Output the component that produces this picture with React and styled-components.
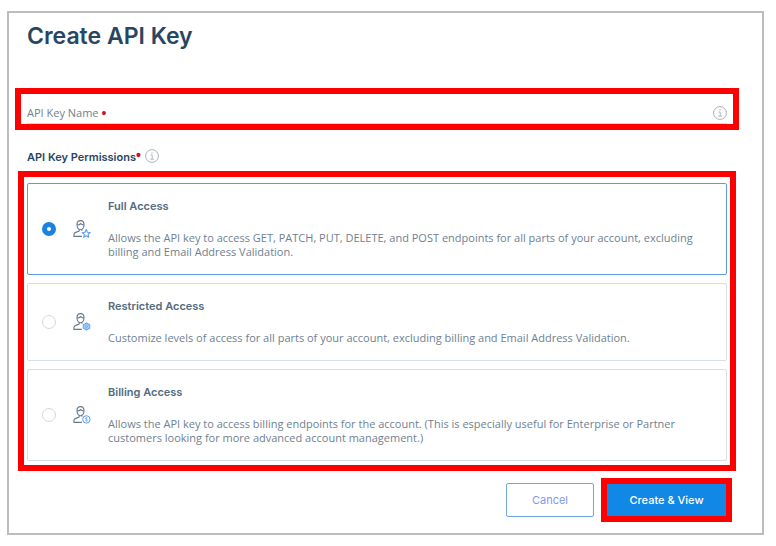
import React, { useState } from 'react';
import styled, { createGlobalStyle } from 'styled-components';

const permissions = [
    {
        id: 'full',
        title: 'Full Access',
        text: 'Allows the API key to access GET, PATCH, PUT, DELETE, and POST endpoints for all parts of your account, excluding billing and Email Address Validation.'
    },
    {
        id: 'restricted',
        title: 'Restricted Access',
        text: 'Customize levels of access for all parts of your account, excluding billing and Email Address Validation.'
    },
    {
        id: 'billing',
        title: 'Billing Access',
        text: 'Allows the API key to access billing endpoints for the account. (This is especially useful for Enterprise or Partner customers looking for more advanced account management.)'
    }
];

const InfoIcon = () => (
    <svg width="14" height="14" viewBox="0 0 14 14" fill="none" stroke="#a9b0bb" aria-hidden="true">
        <circle cx="7" cy="7" r="6.4" strokeWidth="1" />
        <path d="M5.6 6h1.6v4M5.2 10.2h3.8" strokeWidth="0.9" />
        <circle cx="7" cy="3.9" r="0.7" fill="#a9b0bb" stroke="none" />
    </svg>
);

//small blue mark in the corner of the person
const badges = {
    full: (
        <path
            d="M13.2 9.6l1.2 2.6 2.8.3-2.1 1.9.6 2.8-2.5-1.4-2.5 1.4.6-2.8-2.1-1.9 2.8-.3z"
            stroke="#5b9cec"
            strokeLinejoin="round"
        />
    ),
    restricted: (
        <g stroke="#6aa8f2">
            <path d="M13.5 9.9l3.2 1.8v3.6l-3.2 1.8-3.2-1.8v-3.6z" fill="#a5cbf7" strokeLinejoin="round" />
            <circle cx="13.5" cy="13.5" r="1.1" strokeWidth="0.8" />
        </g>
    ),
    billing: (
        <g stroke="#5b9cec">
            <circle cx="13.4" cy="13.4" r="3.7" strokeWidth="1" />
            <path d="M14.6 12.2c-.6-.7-2.2-.5-2.2.3 0 1 2.2.6 2.2 1.7 0 .8-1.7 1-2.4.2M13.4 11v4.8" strokeWidth="0.6" />
        </g>
    )
};

const PersonIcon = ({ type }) => (
    <svg width="18" height="18" viewBox="0 0 18 18" fill="none" strokeWidth="1.1" aria-hidden="true">
        <g stroke="#66798d">
            <path d="M4 4.6C4 2 5.4.6 7.500.6S11 2 11 4.6c0 2.7-1.3 5.1-3.5 5.1S4 7.3 4 4.6z" />
            <path d="M4.2 5c1.800 0 2.900-.5 3.500-1.300C8.500 4.600 9.600 5 10.900 5" />
            <path d="M6.200 9.400v1.500c-.5.800-4.800 1-5.300 3.400v2.100h8M8.900 9.400v1.300" />
        </g>
        {badges[type]}
    </svg>
);

const App = () => {
    const [name, setName] = useState('');
    const [access, setAccess] = useState('full');

    return (
        <>
            <GlobalStyle />
            <Panel onSubmit={e => e.preventDefault()}>
                <Title>Create API Key</Title>
                <NameBox>
                    <NameField>
                        <label htmlFor="key-name">API Key Name <Required>•</Required></label>
                        <input
                            id="key-name"
                            type="text"
                            value={name}
                            onChange={e => setName(e.target.value)}
                        />
                        <InfoIcon />
                    </NameField>
                </NameBox>
                <Permissions aria-labelledby="permissions-title" role="radiogroup">
                    <Heading>
                        <h2 id="permissions-title">API Key Permissions<Required $raised>•</Required></h2>
                        <InfoIcon />
                    </Heading>
                    <OptionsBox>
                        {permissions.map(item => (
                            <Option key={item.id} $selected={access === item.id}>
                                <Radio
                                    name="access"
                                    value={item.id}
                                    checked={access === item.id}
                                    onChange={() => setAccess(item.id)}
                                />
                                <PersonIcon type={item.id} />
                                <OptionText>
                                    <strong>{item.title}</strong>
                                    <span>{item.text}</span>
                                </OptionText>
                            </Option>
                        ))}
                    </OptionsBox>
                </Permissions>
                <Actions>
                    <Button type="button">Cancel</Button>
                    <SubmitBox>
                        <Button type="submit" $primary>Create &amp; View</Button>
                    </SubmitBox>
                </Actions>
            </Panel>
        </>
    );
};

export default App;

const GlobalStyle = createGlobalStyle`
    * {
        box-sizing: border-box;
    }

    body {
        margin: 0;
        background: #fff;
        color: #6f7f92;
        font-family: "Open Sans", "Liberation Sans", sans-serif;
        font-size: 11px;
        line-height: 14px;
    }

    input, button {
        font: inherit;
    }
`;

const Panel = styled.form`
    margin: 11px 12px 11px 7px;
    padding: 7px 23px 11px 6px;
    border: 2px solid #bdbdbd;
`;

const Title = styled.h1`
    margin: 0 0 36px;
    padding-left: 12px;
    color: #294661;
    font-family: Inter, sans-serif;
    font-size: 23px;
    font-weight: 600;
    line-height: 32px;
`;

//Red frames
const Frame = styled.div`
    border: 6px solid #f00;
`;

const NameBox = styled(Frame)`
    padding: 8px 6px 0;
`;

const NameField = styled.div`
    display: flex;
    align-items: center;
    height: 22px;
    border-bottom: 1px solid #c3dcf2;

    input {
        flex: 1;
        min-width: 0;
        padding: 0 8px;
        border: 0;
        outline: none;
        background: transparent;
        color: #294661;
    }
`;

const Required = styled.span`
    color: #c4122f;
    font-family: "Liberation Sans", sans-serif;
    font-size: 14px;
    line-height: 1;
    vertical-align: ${props => (props.$raised ? '1px' : '-1px')};
`;

const Permissions = styled.div`
    margin: 18px 3px 0;
`;

const Heading = styled.div`
    display: flex;
    align-items: center;
    gap: 4px;
    height: 16px;
    margin-bottom: 7px;
    padding-left: 9px;

    h2 {
        margin: 0;
        color: #294661;
        font-family: Inter, sans-serif;
        font-size: 11px;
        font-weight: 600;
        line-height: 16px;
    }
`;

const OptionsBox = styled(Frame)`
    display: grid;
    gap: 8px;
    padding: 6px 3px 4px;
`;

const Option = styled.label`
    display: flex;
    align-items: center;
    gap: 17px;
    padding: 15px 15px 15px 14px;
    border: 1px solid ${props => (props.$selected ? '#5b9be0' : '#d9dfe6')};
    border-radius: 2px;
    cursor: pointer;

    svg {
        flex: none;
    }
`;

const Radio = styled.input.attrs({ type: 'radio' })`
    appearance: none;
    flex: none;
    width: 14px;
    height: 14px;
    margin: 0;
    border: 1px solid #d3d8de;
    border-radius: 50%;
    background: #fff;

    &:checked {
        border: 5px solid #1a82e2;
    }
`;

const OptionText = styled.span`
    display: grid;
    gap: 18px;

    strong {
        color: #546b81;
        font-family: Inter, sans-serif;
        font-weight: 600;
    }
`;

const Actions = styled.div`
    display: flex;
    justify-content: flex-end;
    align-items: center;
    gap: 7px;
    margin: 7px 7px 0 0;
`;

const SubmitBox = styled(Frame)`
    width: 131px;
`;

const Button = styled.button`
    display: block;
    width: ${props => (props.$primary ? '100%' : '88px')};
    height: ${props => (props.$primary ? '32px' : '34px')};
    padding: 0;
    border: 1px solid ${props => (props.$primary ? '#1188e6' : '#6fa8e8')};
    border-radius: ${props => (props.$primary ? '0' : '2px')};
    background: ${props => (props.$primary ? '#1188e6' : '#fff')};
    color: ${props => (props.$primary ? '#fff' : '#7f9be6')};
    font-family: Inter, sans-serif;
    font-weight: ${props => (props.$primary ? '500' : '400')};
    cursor: pointer;
`;
